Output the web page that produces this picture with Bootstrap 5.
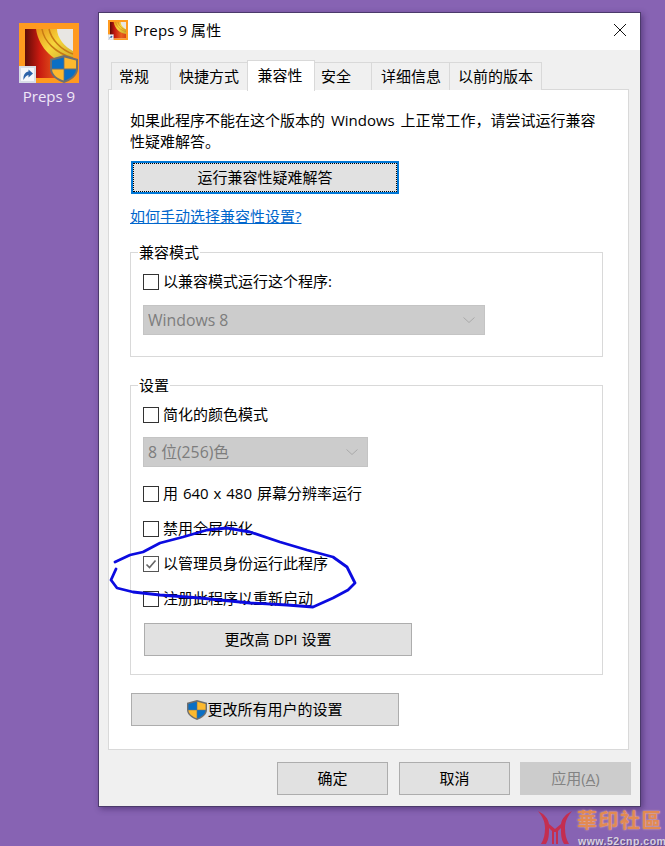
<!DOCTYPE html>
<html lang="zh"><head><meta charset="utf-8">
<title>Preps 9 属性</title>
<link href="https://cdn.jsdelivr.net/npm/bootstrap@5.3.0/dist/css/bootstrap.min.css" rel="stylesheet">
<style>
:root{--ui:"Open Sans","Noto Sans CJK SC",sans-serif}
html,body{height:100%}
body{background:#8763b3;font-family:var(--ui);font-size:15px;line-height:21px;color:#000;overflow:hidden;position:relative;width:665px;height:846px}
.desk-icon{position:absolute;left:9px;top:23px;width:80px;text-align:center;color:#f0e8f8}
.desk-icon svg{display:block;margin:0 auto 1px}
.desk-name{font-size:15px;line-height:24px}
.win{position:absolute;left:98px;top:12px;width:543px;height:795px;background:#f0f0f0;border:1px solid #4b3a6b;box-shadow:2px 2px 6px rgba(40,20,70,.45)}
.win-title{height:37px;background:#fff;padding:0 0 3px 9px;gap:6px}
.win-title .t{font-size:15px;letter-spacing:.1px}
.win-close{width:14px;height:14px;margin-right:13px}
.win-body{padding:9px 11px 0 9px;margin:0}
.tabbar{border:0;padding-left:3px;height:31px;flex-wrap:nowrap;align-items:flex-end;margin:0}
.tabbar .nav-item{margin:0}
.tabbar .nav-link{height:28px;margin:0 -1px 0 0;border:1px solid #d9d9d9;border-bottom:0;border-radius:0;background:#f0f0f0;color:#000;font-size:15px;line-height:27px;padding:0;white-space:nowrap;text-align:left}
.tabbar .nav-link.active{height:31px;line-height:28px;background:#fff;position:relative;z-index:2;margin-bottom:-1px;border-color:#d9d9d9;color:#000;text-align:center}
.tabbar .nav-item:nth-child(1) .nav-link{width:60px;padding-left:7px}
.tabbar .nav-item:nth-child(2) .nav-link{width:78px;padding-left:8px}
.tabbar .nav-item:nth-child(3) .nav-link{width:68px;padding-right:2px}
.tabbar .nav-item:nth-child(4) .nav-link{width:58px;padding-left:6px}
.tabbar .nav-item:nth-child(5) .nav-link{width:79px;padding-left:9px}
.tabbar .nav-item:nth-child(6) .nav-link{width:93px;padding-left:8px}
.panel{height:661px;background:#fff;border:1px solid #d9d9d9;padding:20px 0 0 21px;margin-top:-1px}
.intro{width:473px;margin:0;word-spacing:2px}
.xbtn{display:block;background:#e1e1e1;border:1px solid #adadad;border-radius:0;color:#000;font-size:15px;line-height:21px;padding:0;height:33px;width:268px}
.xbtn:hover{background:#e1e1e1;border-color:#adadad;color:#000}
.xbtn.fcs{margin:9px 0 0 1px;border:2px solid #0078d7;outline:1px dotted #000;outline-offset:-3px}
.xbtn.fcs:hover{border-color:#0078d7}
.helplink{display:inline-block;margin-top:12px;color:#0066cc;text-decoration:underline}
.grp{border:1px solid #d9d9d9;margin:0;padding:0 0 0 12px;width:473px}
.grp legend{float:none;width:auto;margin:0 0 0 -5px;padding:0 1px;font-size:15px;line-height:21px}
.g1{margin-top:15px;height:115px}
.g2{margin-top:18px;height:300px}
.chk{display:flex;align-items:center;gap:4px;min-height:21px;padding:0;margin:14px 0 0;line-height:21px}
.chk.first{margin-top:8px}
.chk.aftersel{margin-top:16px;word-spacing:1px}
.chk .form-check-input{width:16px;height:16px;margin:0;float:none;border:1px solid #333;border-radius:0;background-color:#fff;box-shadow:none;flex:none}
.chk .form-check-input:checked{background-color:#fff;border-color:#555;background-size:14px;background-image:url("data:image/svg+xml,%3csvg xmlns='http://www.w3.org/2000/svg' viewBox='0 0 14 14'%3e%3cpath fill='none' stroke='%23666' stroke-width='1.6' d='M2.5 7.5l3 3 6-7'/%3e%3c/svg%3e")}
.chk .form-check-label{opacity:1!important;color:#000}
.dis{display:block;border:1px solid #c4c4c4;border-radius:0;height:30px;padding:0 4px;font-size:15.800px;line-height:28px;color:#7d7d7d;background-color:#ccc;background-size:14px 8px;background-position:right 8px center;background-image:url("data:image/svg+xml,%3csvg xmlns='http://www.w3.org/2000/svg' viewBox='0 0 14 8'%3e%3cpath fill='none' stroke='%23aaa' d='M1.5 1.5l5.5 5 5.500-5'/%3e%3c/svg%3e")}
.dis:disabled{background-color:#ccc;color:#7d7d7d;opacity:1}
.s1{width:342px;margin-top:13px}.s2{width:225px;margin-top:12px}
.dpi{margin:14px 0 0 1px}
.allusers{margin:18px 0 0 1px}
.dbtns{padding:12px 0 0 169px;gap:11px;width:542px}
.dbtns .xbtn{width:111px}
.dbtns .xbtn:last-child{margin-left:-1px}
.dbtns .xbtn:disabled{background:#ccc;border-color:#ccc;color:#838383;opacity:1}
.ink{position:absolute;left:0;top:0;pointer-events:none;z-index:5}
.mark-wm{position:absolute;left:536px;top:808px;width:129px;height:38px;z-index:6}
.mark-wm svg{display:block}
.wm-cn{position:absolute;left:41px;top:0;font-family:"Noto Sans CJK TC",serif;font-weight:700;font-size:20px;line-height:24px;letter-spacing:1.500px;color:#e28a52;white-space:nowrap;text-shadow:0 0 2px #f6c6a2}
.wm-url{position:absolute;left:42px;top:26.500px;font-family:"Liberation Sans",sans-serif;font-weight:700;font-size:10.500px;line-height:12px;letter-spacing:.5px;color:#d8d0e0;white-space:nowrap;text-shadow:1px 1px 0 #5d4a80}
</style></head><body>
<svg width="0" height="0" style="position:absolute"><defs>
<symbol id="shield" viewBox="0 0 28 28">
<path d="M14 0 L28 4 V14 C28 21 20 26 14 28 C8 26 0 21 0 14 V4Z" fill="#6f6f6f"/>
<path d="M13.600 2.500 V13.600 H2 V5.500Z" fill="#0a6fc4"/><path d="M14.400 2.500 L26 5.500 V13.600 H14.400Z" fill="#fdb92e"/>
<path d="M2 14.400 H13.600 V25.600 C8 23.500 2.500 20 2 14.400Z" fill="#fdb92e"/><path d="M14.400 14.400 H26 C25.500 20 20 23.500 14.400 25.600Z" fill="#0a6fc4"/>
</symbol>
<linearGradient id="rd" x1="0" x2="1" y1="0" y2="0"><stop offset="0" stop-color="#5e0b08"/><stop offset=".3" stop-color="#c81a10"/><stop offset=".7" stop-color="#e8601c"/><stop offset="1" stop-color="#d8431a"/></linearGradient>
<linearGradient id="ye" x1="0" x2="1" y1="0" y2="1"><stop offset="0" stop-color="#e8941a"/><stop offset=".45" stop-color="#f6d63c"/><stop offset="1" stop-color="#c8a52c"/></linearGradient>
<symbol id="appicon" viewBox="0 0 60 60">
<rect width="60" height="60" fill="#ff9a1f"/>
<rect x="6" y="6" width="48" height="49" fill="#e8e6e3"/>
<path d="M6 6H20C22 22 30 34 54 40V55H6Z" fill="url(#rd)"/>
<path d="M17 6H38C38 15 46 24 54 28V42C36 40 20 26 17 6Z" fill="url(#ye)"/>
<path d="M23 6C25 18 36 30 54 35M30 6C32 16 42 27 54 31" fill="none" stroke="#c87a14" stroke-width="1.500"/>
<rect y="43" width="17" height="17" fill="#d8dde6"/><rect x="2" y="45" width="13" height="13" fill="#f4f6fa"/>
<path d="M4.500 57 C4 51.500 6.500 49 9.500 48.500 V46.500 L14 50.500 9.500 54.500 V52 C7.500 52.300 6 54 4.500 57Z" fill="#2a62a8"/>
</symbol>
</defs></svg>

<div class="desk-icon">
<svg width="60" height="60" viewBox="0 0 60 60"><use href="#appicon"/><use href="#shield" x="31" y="32" width="28" height="28"/></svg>
<div class="desk-name">Preps 9</div>
</div>

<div class="win">
<div class="win-title d-flex align-items-center">
<svg width="20" height="20"><use href="#appicon"/></svg>
<span class="t">Preps 9 属性</span>
<svg class="win-close ms-auto" viewBox="0 0 14 14"><path d="M1 1L13 13M13 1L1 13" stroke="#111" fill="none"/></svg>
</div>
<div class="win-body">
<ul class="nav nav-tabs tabbar">
<li class="nav-item"><a class="nav-link" href="#">常规</a></li>
<li class="nav-item"><a class="nav-link" href="#">快捷方式</a></li>
<li class="nav-item"><a class="nav-link active" href="#">兼容性</a></li>
<li class="nav-item"><a class="nav-link" href="#">安全</a></li>
<li class="nav-item"><a class="nav-link" href="#">详细信息</a></li>
<li class="nav-item"><a class="nav-link" href="#">以前的版本</a></li>
</ul>
<div class="panel">
<p class="intro">如果此程序不能在这个版本的 Windows 上正常工作，请尝试运行兼容性疑难解答。</p>
<button type="button" class="btn xbtn fcs">运行兼容性疑难解答</button>
<a class="helplink" href="#">如何手动选择兼容性设置?</a>
<fieldset class="grp g1">
<legend>兼容模式</legend>
<div class="form-check chk first"><input class="form-check-input" type="checkbox" id="c1"><label class="form-check-label" for="c1">以兼容模式运行这个程序:</label></div>
<select class="form-select dis s1" disabled><option>Windows 8</option></select>
</fieldset>
<fieldset class="grp g2">
<legend>设置</legend>
<div class="form-check chk first"><input class="form-check-input" type="checkbox" id="c2"><label class="form-check-label" for="c2">简化的颜色模式</label></div>
<select class="form-select dis s2" disabled><option>8 位(256)色</option></select>
<div class="form-check chk aftersel"><input class="form-check-input" type="checkbox" id="c3"><label class="form-check-label" for="c3">用 640 x 480 屏幕分辨率运行</label></div>
<div class="form-check chk"><input class="form-check-input" type="checkbox" id="c4"><label class="form-check-label" for="c4">禁用全屏优化</label></div>
<div class="form-check chk"><input class="form-check-input" type="checkbox" id="c5" checked><label class="form-check-label" for="c5">以管理员身份运行此程序</label></div>
<div class="form-check chk"><input class="form-check-input" type="checkbox" id="c6"><label class="form-check-label" for="c6">注册此程序以重新启动</label></div>
<button type="button" class="btn xbtn dpi">更改高 DPI 设置</button>
</fieldset>
<button type="button" class="btn xbtn allusers d-flex align-items-center justify-content-center"><svg width="20" height="20"><use href="#shield"/></svg>更改所有用户的设置</button>
</div>
<div class="d-flex dbtns">
<button type="button" class="btn xbtn">确定</button>
<button type="button" class="btn xbtn">取消</button>
<button type="button" class="btn xbtn" disabled>应用(<u>A</u>)</button>
</div>
</div>
</div>

<svg class="ink" width="665" height="846" viewBox="0 0 665 846"><path fill="none" stroke="#0b0be0" stroke-width="2.800" stroke-linecap="round" stroke-linejoin="round" d="M115 562L130 555 143 552 160 543 183 537 207 530 227 528 250 532 280 542 307 550 333 557 347 567 355 583 348 590 333 598 313 607 287 605 250 603 200 598 160 595 133 592 117 588 111 580 116 569"/></svg>

<div class="mark-wm">
<svg width="38" height="38" viewBox="0 0 38 38"><path d="M2 3C8 6 12 10 13 16 L19 21 25 16C26 10 30 6 36 3 C32 8 29 13 29 20 C29 26 30 31 33 36 H28 C25 31 25 26 25 20 L22 23 V36 H20 V24 H18 V36 H16 V23 L13 20 C13 26 13 31 10 36 H5 C8 31 9 26 9 20 C9 13 6 8 2 3Z" fill="#c42e50"/></svg>
<span class="wm-cn">華印社區</span>
<span class="wm-url">www.52cnp.com</span>
</div>
</body></html>
